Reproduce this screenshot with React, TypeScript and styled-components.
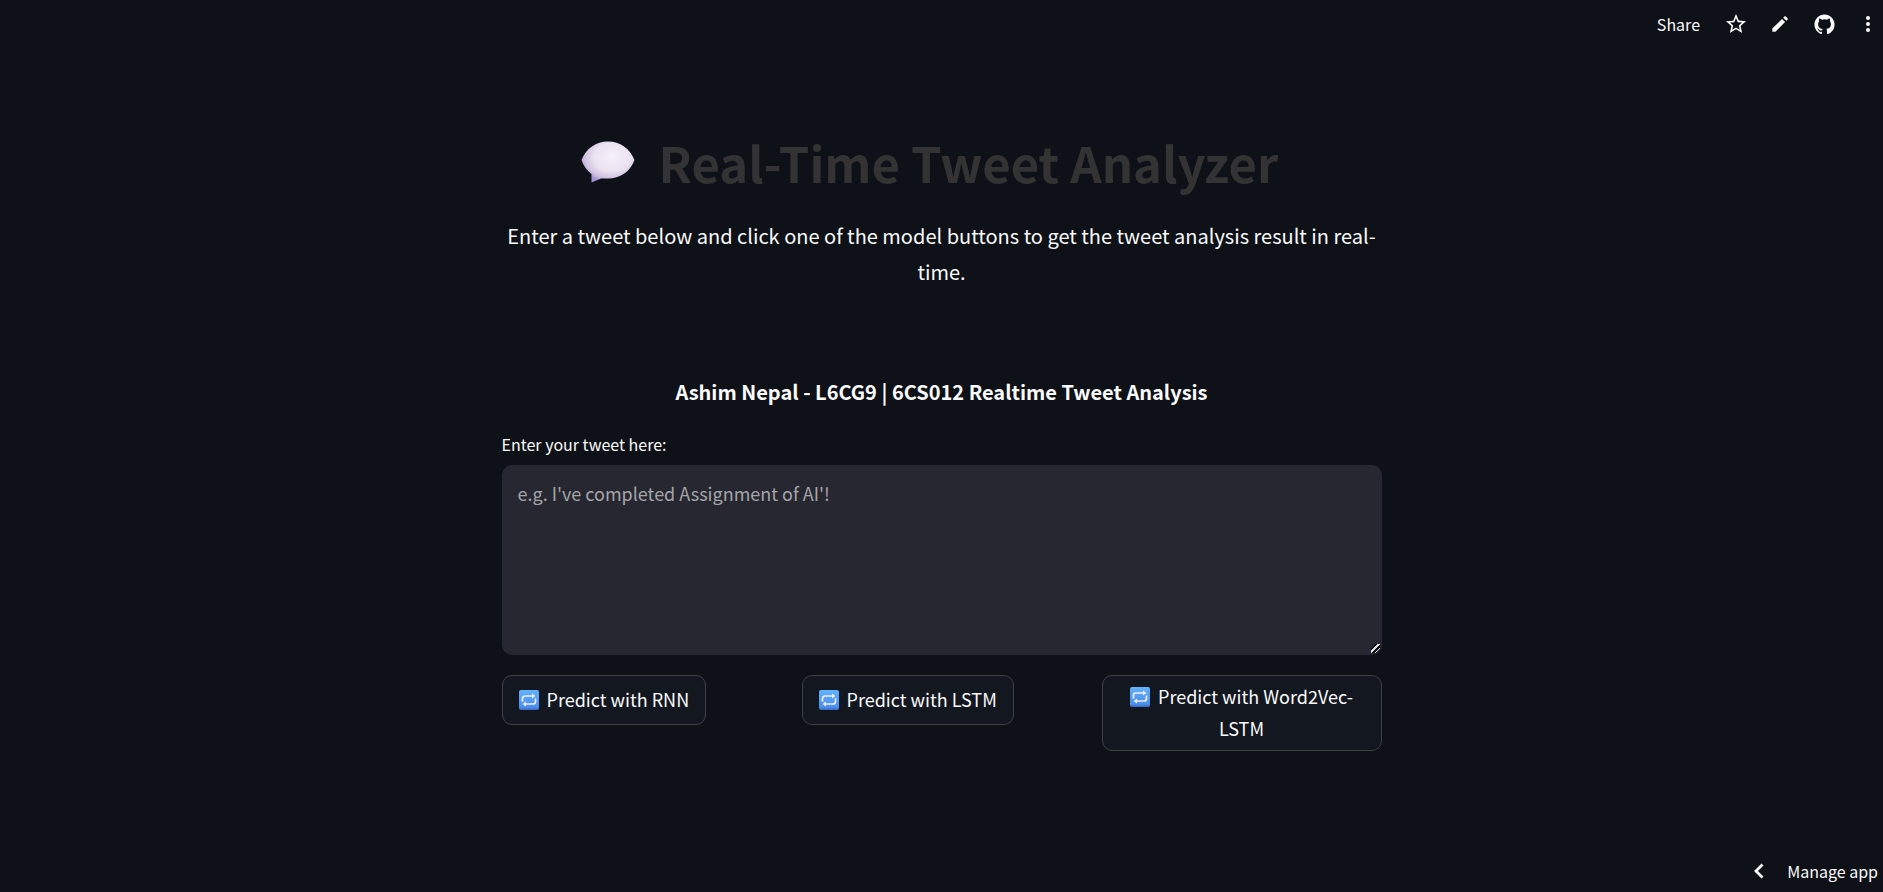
import React from "react";
import styled, { createGlobalStyle } from "styled-components";

const GlobalStyle = createGlobalStyle`
  *, *::before, *::after { box-sizing: border-box; }
  body {
    margin: 0;
    background: #0e1117;
    color: #fafafa;
    color-scheme: dark;
    font-family: "Noto Sans CJK SC", "Noto Sans", sans-serif;
    font-size: 18px;
  }
  button, textarea { font: inherit; color: inherit; }
`;

const Page = styled.div`
  display: flex;
  flex-direction: column;
  min-height: 100vh;
`;

const Toolbar = styled.header`
  display: flex;
  justify-content: flex-end;
  align-items: center;
  gap: 24px;
  height: 48px;
  padding-right: 3px;
`;

const ToolButton = styled.button`
  display: flex;
  align-items: center;
  justify-content: center;
  min-width: 24px;
  height: 32px;
  padding: 0;
  border: 0;
  background: none;
  font-size: 16px;
  cursor: pointer;
`;

const ToolGroup = styled.div`
  display: flex;
  align-items: center;
  gap: 20px;
`;

const Main = styled.main`
  width: 100%;
  max-width: 880px;
  margin: 0 auto;
  padding-top: 76px;
`;

const Title = styled.h1`
  display: flex;
  align-items: center;
  justify-content: center;
  gap: 24px;
  margin: 0;
  padding-right: 24px;
  color: #333333;
  font-size: 49px;
  font-weight: 700;
  line-height: 76px;
`;

const Intro = styled.p`
  margin: 18px 0 86px;
  text-align: center;
  font-size: 20px;
  line-height: 36px;
`;

const Author = styled.h2`
  margin: 0 0 24px;
  text-align: center;
  font-size: 20px;
  font-weight: 700;
  line-height: 32px;
`;

const Label = styled.label`
  display: block;
  margin-bottom: 8px;
  font-size: 16px;
  line-height: 25px;
`;

const TweetBox = styled.textarea`
  display: block;
  width: 100%;
  height: 190px;
  padding: 14px 16px;
  border: 0;
  border-radius: 10px;
  outline: 0;
  background: #262730;
  line-height: 28px;
  resize: vertical;
  &::placeholder { color: #a5a5a8; opacity: 1; }
  &::-webkit-resizer {
    background: linear-gradient(
      135deg,
      transparent 25%,
      #08090c 25% 37%,
      #dcdcdc 37% 51%,
      #08090c 51% 68%,
      #dcdcdc 68% 76%,
      transparent 76%
    ) 4px 4px / 9px 9px no-repeat;
  }
`;

const Models = styled.div`
  display: grid;
  grid-template-columns: repeat(3, minmax(0, 1fr));
  gap: 20px;
  align-items: start;
  justify-items: start;
  margin-top: 20px;
`;

const ModelButton = styled.button`
  min-height: 50px;
  padding: 4px 16px 6px;
  border: 1px solid #3d4045;
  border-radius: 10px;
  background: #131720;
  line-height: 32px;
  cursor: pointer;
`;

const RepeatMark = styled.svg`
  width: 20px;
  height: 20px;
  margin-right: 8px;
  vertical-align: -3px;
`;

const Footer = styled.footer`
  display: flex;
  justify-content: flex-end;
  margin-top: auto;
  padding: 0 5px 5px;
`;

const ManageButton = styled.button`
  display: flex;
  align-items: center;
  gap: 16px;
  height: 32px;
  padding: 0;
  border: 0;
  background: none;
  font-size: 16px;
  cursor: pointer;
`;

const SpeechBubble = () => (
  <svg width="54" height="42" viewBox="0 0 54 42" aria-hidden="true">
    <defs>
      <radialGradient id="bubble" cx="0.58" cy="0.38" r="0.62">
        <stop offset="0" stopColor="#f6f0f9" />
        <stop offset="0.55" stopColor="#ebe3f1" />
        <stop offset="0.85" stopColor="#d0c2e0" />
        <stop offset="1" stopColor="#a893d2" />
      </radialGradient>
    </defs>
    <path
      fill="url(#bubble)"
      d="M0.500 19C5 7.500 15 0.500 27 0.500S49 7.500 53.500 19C49 31 39 37.500 27 37.500H20L10.500 41.500V33C6 29.500 2.500 25 0.500 19Z"
    />
  </svg>
);

const RepeatIcon = () => (
  <RepeatMark viewBox="0 0 20 20" aria-hidden="true">
    <defs>
      <linearGradient id="tile" x1="0" y1="0" x2="0" y2="1">
        <stop offset="0" stopColor="#62b2fc" />
        <stop offset="0.85" stopColor="#4a90ee" />
        <stop offset="1" stopColor="#3f66c4" />
      </linearGradient>
    </defs>
    <rect width="20" height="20" rx="2" fill="url(#tile)" />
    <path
      d="M3.500 11V8.500Q3.500 6 6 6H14M16.500 9V11.500Q16.500 14 14 14H6"
      fill="none"
      stroke="#f1ecfb"
      strokeWidth="1.700"
      strokeLinecap="round"
    />
    <path d="M13 3.500L16.500 6L13 8.500ZM7 11.500L3.500 14L7 16.500Z" fill="#f1ecfb" />
  </RepeatMark>
);

const Icon = ({ d, size = 24 }: { d: string; size?: number }) => (
  <svg width={size} height={size} viewBox="0 0 24 24" fill="currentColor" aria-hidden="true">
    <path d={d} />
  </svg>
);

const PencilIcon = () => (
  <svg width="16" height="16" viewBox="0 0 16 16" fill="currentColor" aria-hidden="true">
    <path d="M1.200 15.800Q.3 15.800.3 14.900V12.600L10 2.900L13.100 6L3.400 15.800Z" />
    <path d="M11.200 1.700L12.300.6Q13.100-.1 13.900.6L15.400 2.100Q16.100 2.900 15.400 3.700L14.300 4.800Z" />
  </svg>
);

const ChevronIcon = () => (
  <svg width="24" height="24" viewBox="0 0 24 24" fill="none" stroke="currentColor" strokeWidth="2.800" aria-hidden="true">
    <path d="M15.500 5.500L9 12L15.500 18.500" />
  </svg>
);

const STAR =
  "M22 9.240l-7.190-.62L12 2 9.190 8.630 2 9.240l5.460 4.730L5.820 21 12 17.270 18.180 21l-1.630-7.030L22 9.240zM12 15.400l-3.760 2.270 1-4.280-3.320-2.880 4.380-.38L12 6.100l1.710 4.040 4.380.38-3.320 2.880 1 4.280L12 15.400z";
const GITHUB =
  "M12 .5C5.650.5.5 5.650.5 12c0 5.080 3.290 9.390 7.860 10.910.58.110.79-.25.79-.56v-1.960c-3.200.7-3.870-1.540-3.870-1.540-.52-1.330-1.280-1.680-1.280-1.680-1.050-.72.080-.7.080-.7 1.160.080 1.770 1.190 1.770 1.190 1.030 1.770 2.700 1.260 3.360.96.100-.75.400-1.260.73-1.550-2.550-.29-5.240-1.280-5.240-5.680 0-1.260.45-2.280 1.180-3.080-.12-.29-.51-1.460.11-3.040 0 0 .97-.31 3.160 1.180a10.980 10.980 0 0 1 5.760 0c2.190-1.490 3.150-1.180 3.150-1.180.63 1.580.23 2.750.12 3.040.74.800 1.180 1.830 1.180 3.080 0 4.420-2.690 5.390-5.250 5.670.41.360.78 1.060.78 2.130v3.160c0 .31.210.68.800.56A11.500 11.500 0 0 0 23.500 12C23.500 5.650 18.350.5 12 .5z";
const DOTS =
  "M12 8a2 2 0 1 0 0-4 2 2 0 0 0 0 4zm0 2a2 2 0 1 0 0 4 2 2 0 0 0 0-4zm0 6a2 2 0 1 0 0 4 2 2 0 0 0 0-4z";

const MODELS = ["RNN", "LSTM", "Word2Vec-LSTM"];

export default function App() {
  return (
    <>
      <GlobalStyle />
      <Page>
        <Toolbar>
          <ToolButton>Share</ToolButton>
          <ToolGroup>
            <ToolButton aria-label="Favorite"><Icon d={STAR} /></ToolButton>
            <ToolButton aria-label="Edit"><PencilIcon /></ToolButton>
            <ToolButton aria-label="View source"><Icon d={GITHUB} size={21} /></ToolButton>
            <ToolButton aria-label="More options"><Icon d={DOTS} /></ToolButton>
          </ToolGroup>
        </Toolbar>
        <Main>
          <Title>
            <SpeechBubble />
            Real-Time Tweet Analyzer
          </Title>
          <Intro>
            Enter a tweet below and click one of the model buttons to get the tweet analysis result in real-&#8203;time.
          </Intro>
          <Author>Ashim Nepal - L6CG9 | 6CS012 Realtime Tweet Analysis</Author>
          <Label htmlFor="tweet">Enter your tweet here:</Label>
          <TweetBox id="tweet" placeholder="e.g. I've completed Assignment of AI'!" />
          <Models>
            {MODELS.map((model) => (
              <ModelButton key={model}>
                <RepeatIcon />
                {`Predict with ${model}`}
              </ModelButton>
            ))}
          </Models>
        </Main>
        <Footer>
          <ManageButton>
            <ChevronIcon />
            Manage app
          </ManageButton>
        </Footer>
      </Page>
    </>
  );
}
